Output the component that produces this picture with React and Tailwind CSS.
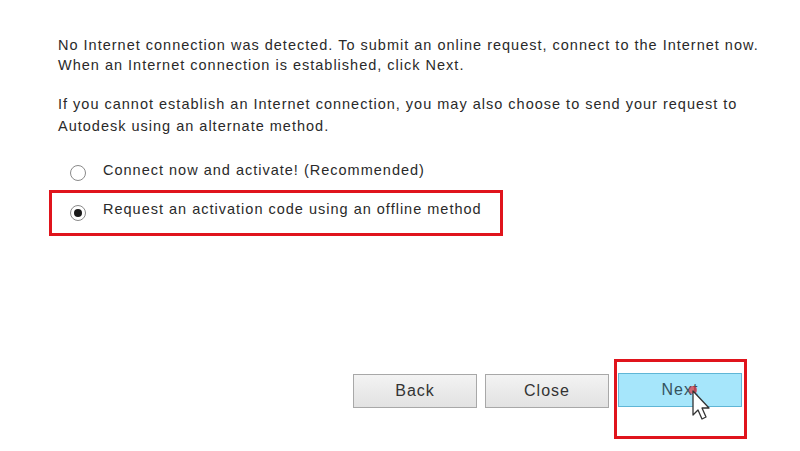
export default function App() {
  const font = { fontFamily: '"Liberation Sans", Arial, sans-serif' };
  return (
    <div className="w-[800px] h-[451px] bg-white relative overflow-hidden text-[#2a2a2a]" style={font}>
      <div className="pl-[58px] pt-[35px] text-[14.5px] leading-[20px] tracking-[1px]">
        <p>No Internet connection was detected. To submit an online request, connect to the Internet now.</p>
        <p>When an Internet connection is established, click Next.</p>
        <p className="mt-[18px] leading-[22px]">If you cannot establish an Internet connection, you may also choose to send your request to</p>
        <p className="leading-[22px]">Autodesk using an alternate method.</p>
      </div>
      <div className="pl-[49px] mt-[24px]">
        <div className="flex items-center h-[24px] pl-[21px]">
          <span className="w-[16px] h-[16px] rounded-full border border-[#8a8a8a] bg-white"></span>
          <span className="ml-[17px] text-[14.5px] tracking-[1px] -mt-[4px]">Connect now and activate! (Recommended)</span>
        </div>
        <div className="mt-[5px] w-[454px] h-[46px] border-[3px] border-[#e0141c] flex items-center pl-[18px]">
          <span className="w-[16px] h-[16px] rounded-full border border-[#8a8a8a] bg-white flex items-center justify-center">
            <span className="w-[8px] h-[8px] rounded-full bg-[#1a1a1a]"></span>
          </span>
          <span className="ml-[17px] text-[14.5px] tracking-[1px] -mt-[7px]">Request an activation code using an offline method</span>
        </div>
      </div>
      <div className="mt-[123px] flex items-start pl-[353px]">
        <button className="mt-[15px] w-[124px] h-[34px] border border-[#a8a8a8] bg-gradient-to-b from-[#f3f3f3] to-[#e2e2e2] text-[16px] tracking-[1px] text-[#333]">Back</button>
        <button className="mt-[15px] ml-[8px] w-[124px] h-[34px] border border-[#a8a8a8] bg-gradient-to-b from-[#f3f3f3] to-[#e2e2e2] text-[16px] tracking-[1px] text-[#333]">Close</button>
        <div className="ml-[5px] w-[133px] h-[80px] border-[3px] border-[#e0141c] pl-[1px] pt-[11px]">
          <button className="w-[124px] h-[34px] border border-[#5fb6d6] bg-[#a6e6fb] text-[16px] tracking-[1px] text-[#35535e]">Next</button>
        </div>
      </div>
      <svg className="absolute left-[684px] top-[385px]" width="30" height="40" viewBox="0 0 30 40">
        <circle cx="9" cy="5" r="4" fill="#e0303a" opacity="0.7" />
        <path d="M9 6 L9 30 L14 25 L18 34 L22 32 L18 23 L25 23 Z" fill="#ffffff" stroke="#333" strokeWidth="1.3" strokeLinejoin="round" />
      </svg>
    </div>
  );
}
